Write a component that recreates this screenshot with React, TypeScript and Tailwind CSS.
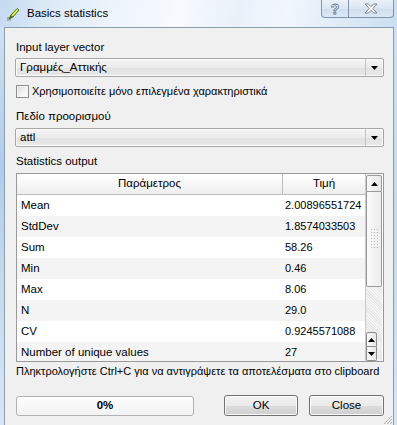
import React from "react";

const rows: [string, string][] = [
  ["Mean", "2.00896551724"],
  ["StdDev", "1.8574033503"],
  ["Sum", "58.26"],
  ["Min", "0.46"],
  ["Max", "8.06"],
  ["N", "29.0"],
  ["CV", "0.9245571088"],
  ["Number of unique values", "27"],
];

function Arrow({ up = false }: { up?: boolean }) {
  return (
    <svg width="7" height="4" viewBox="0 0 7 4">
      {up ? <polygon points="0,4 7,4 3.5,0" fill="#000" /> : <polygon points="0,0 7,0 3.5,4" fill="#000" />}
    </svg>
  );
}

function Combo({ text }: { text: string }) {
  return (
    <div className="h-[19px] flex rounded-[2px] border border-[#a7a7a7] bg-[linear-gradient(#f4f4f4,#ececec_50%,#e2e2e2_51%,#e8e8e8)] shadow-[inset_0_0_0_1px_#fbfbfb]">
      <div className="flex-1 flex items-center pl-[4px] text-[11.5px] text-black leading-none">{text}</div>
      <div className="w-[18px] border-l border-[#c5c5c5] flex items-center justify-center">
        <Arrow />
      </div>
    </div>
  );
}

function Btn({ label, className = "" }: { label: string; className?: string }) {
  return (
    <div
      className={`h-[21px] rounded-[3px] border border-[#707070] bg-[linear-gradient(#f2f2f2,#ebebeb_50%,#dddddd_51%,#cfcfcf)] shadow-[inset_0_0_0_1px_#fcfcfc] flex items-center justify-center text-[11.5px] text-black ${className}`}
    >
      {label}
    </div>
  );
}

export default function App() {
  return (
    <div
      className="w-[397px] h-[425px] flex flex-col overflow-hidden bg-[#f0f0f0]"
      style={{ fontFamily: '"Liberation Sans", Arial, sans-serif' }}
    >
      {/* Title bar */}
      <div className="h-[27px] shrink-0 relative flex items-center bg-[linear-gradient(100deg,#c4daf0_0%,#dceaf7_12%,#eef5fc_30%,#f7fafe_45%,#e8f1fa_60%,#f1f7fd_72%,#dbe9f6_88%,#cadff2_100%)]">
        <div className="ml-[7px] mt-[1px] w-[13px] h-[14px] shrink-0">
          <svg width="13" height="14" viewBox="0 0 13 14">
            <path d="M2 12 L4 8 L10 1.5 L12 3 L6 10 Z" fill="#a6d43a" stroke="#3f6d12" strokeWidth="0.9" />
            <path d="M4.5 8.5 L10 2.6 L11 3.3 L5.5 9.3 Z" fill="#e8f36a" />
            <path d="M2 12 L4 8 L6 10 Z" fill="#3f6d12" />
            <rect x="0.5" y="12.5" width="1" height="1" fill="#222" />
            <rect x="2.5" y="12.5" width="1" height="1" fill="#222" />
            <rect x="0.5" y="10.5" width="1" height="1" fill="#222" />
          </svg>
        </div>
        <div className="ml-[7px] text-[11.5px] text-black">Basics statistics</div>
        <div className="absolute top-0 left-[321px] flex">
          <div className="w-[28px] h-[18px] rounded-bl-[4px] border border-t-0 border-[#8094ad] bg-[linear-gradient(#eaf1f9,#dbe6f3_50%,#cfdded_51%,#dde8f4)] flex items-center justify-center">
            <span
              className="text-[14px] font-bold leading-none text-white"
              style={{ WebkitTextStroke: "0.8px #6b7687" }}
            >
              ?
            </span>
          </div>
          <div className="w-[45px] h-[18px] rounded-br-[4px] border border-l-0 border-t-0 border-[#8094ad] bg-[linear-gradient(#eaf1f9,#dbe6f3_50%,#cfdded_51%,#dde8f4)] flex items-center justify-center">
            <svg width="14" height="11" viewBox="0 0 14 11">
              <path
                d="M1 1 L4.5 1 L7 3.6 L9.5 1 L13 1 L8.8 5.5 L13 10 L9.5 10 L7 7.4 L4.5 10 L1 10 L5.2 5.5 Z"
                fill="#fbfcfe"
                stroke="#6b7687"
                strokeWidth="0.9"
                strokeLinejoin="round"
              />
            </svg>
          </div>
        </div>
      </div>

      {/* Body row */}
      <div className="flex-1 flex min-h-0">
        <div className="w-[4px] shrink-0 bg-[linear-gradient(#cfe1f3,#aecdeb_35%,#c2d9ef_60%,#d6e6f5)]" />
        <div className="flex-1 min-w-0 border-l border-t border-r border-[#8b9db3] bg-[#f0f0f0] relative flex flex-col pl-[10px] pr-[9px]">
          <div className="mt-[12px] h-[14px] leading-[14px] text-[11.5px] text-black pl-[1px]">Input layer vector</div>
          <div className="mt-[4px]">
            <Combo text="Γραμμές_Αττικής" />
          </div>
          <div className="mt-[8px] h-[13px] flex items-center">
            <div className="ml-[1px] w-[13px] h-[13px] shrink-0 border border-[#8e8f8f] bg-[linear-gradient(135deg,#dcdcdc,#f4f4f4_60%,#ffffff)] shadow-[inset_0_0_0_1px_#f4f4f4]" />
            <div className="ml-[3px] text-[11px] text-black leading-[13px] whitespace-nowrap">
              Χρησιμοποιείτε μόνο επιλεγμένα χαρακτηριστικά
            </div>
          </div>
          <div className="mt-[11px] h-[14px] leading-[14px] text-[11.5px] text-black pl-[1px]">Πεδίο προορισμού</div>
          <div className="mt-[5px]">
            <Combo text="attl" />
          </div>
          <div className="mt-[7px] h-[14px] leading-[14px] text-[11.5px] text-black pl-[1px]">Statistics output</div>

          {/* Table */}
          <div className="mt-[5px] ml-[1px] h-[189px] shrink-0 border border-[#9a9a9a] bg-white flex overflow-hidden">
            <div className="flex-1 min-w-0 flex flex-col overflow-hidden">
              <div className="h-[21px] shrink-0 flex border-b border-[#bdbdbd] bg-[linear-gradient(#ffffff,#f7f7f7_50%,#eeeeee)] text-[11.5px] text-black">
                <div className="w-[266px] shrink-0 flex items-center justify-center border-r border-[#bdbdbd]">Παράμετρος</div>
                <div className="flex-1 flex items-center justify-center">Τιμή</div>
              </div>
              {rows.map(([k, v], i) => (
                <div
                  key={k}
                  className={`h-[21px] shrink-0 flex items-center text-[11.5px] text-black ${i % 2 === 1 ? "bg-[#f4f4f4]" : "bg-white"}`}
                >
                  <div className="w-[266px] shrink-0 pl-[4px]">{k}</div>
                  <div className="flex-1 pl-[2px] whitespace-nowrap text-[11px]">{v}</div>
                </div>
              ))}
            </div>
            {/* Scrollbar */}
            <div className="w-[17px] shrink-0 flex flex-col border-l border-[#c9c9c9] bg-[#f4f4f4] mr-[1px]">
              <div className="h-[17px] shrink-0 mt-[1px] rounded-t-[2px] border border-[#9a9a9a] bg-[linear-gradient(90deg,#f7f7f7,#e8e8e8)] flex items-center justify-center">
                <Arrow up />
              </div>
              <div className="h-[95px] shrink-0 border border-t-0 border-[#9a9a9a] rounded-b-[2px] bg-[linear-gradient(90deg,#fafafa,#ececec)] flex items-center justify-center">
                <div className="w-[8px] h-[22px] bg-[radial-gradient(#b8b8b8_0.8px,transparent_0.9px)] bg-[length:3px_3px]" />
              </div>
              <div className="flex-1 flex bg-[repeating-linear-gradient(45deg,#e6e6e6_0px,#e6e6e6_1px,#f6f6f6_1px,#f6f6f6_2px)]">
                <div className="flex-1 flex flex-col justify-end">
                  <div className="w-[11px] h-[15px] rounded-t-[2px] border border-[#8c8c8c] bg-[linear-gradient(90deg,#fafafa,#e6e6e6)] flex items-center justify-center">
                    <Arrow up />
                  </div>
                  <div className="w-[11px] h-[14px] rounded-b-[2px] border border-t-0 border-[#8c8c8c] bg-[linear-gradient(90deg,#fafafa,#e6e6e6)] flex items-center justify-center">
                    <Arrow />
                  </div>
                </div>
              </div>
            </div>
          </div>

          <div className="mt-[2px] h-[14px] leading-[14px] text-[11px] text-black pl-[1px] whitespace-nowrap">
            Πληκτρολογήστε Ctrl+C για να αντιγράψετε τα αποτελέσματα στο clipboard
          </div>

          <div className="mt-[17px] flex items-center">
            <div className="ml-[1px] w-[178px] h-[20px] shrink-0 rounded-[3px] border border-[#b2b2b2] bg-[linear-gradient(#fdfdfd,#f3f3f3)] flex items-center justify-center text-[11.5px] font-bold text-black">
              0%
            </div>
            <Btn label="OK" className="ml-[30px] w-[74px] shrink-0" />
            <Btn label="Close" className="ml-[11px] w-[75px] shrink-0" />
          </div>

          <svg className="absolute right-0 bottom-0" width="11" height="11" viewBox="0 0 11 11">
            <path d="M10 2 L2 10 M10 5 L5 10 M10 8 L8 10" stroke="#b5b5b5" strokeWidth="1" />
          </svg>
        </div>
        <div className="w-[3px] shrink-0 bg-[linear-gradient(#cfe1f3,#c2d9ef_50%,#d6e6f5)]" />
      </div>
    </div>
  );
}
